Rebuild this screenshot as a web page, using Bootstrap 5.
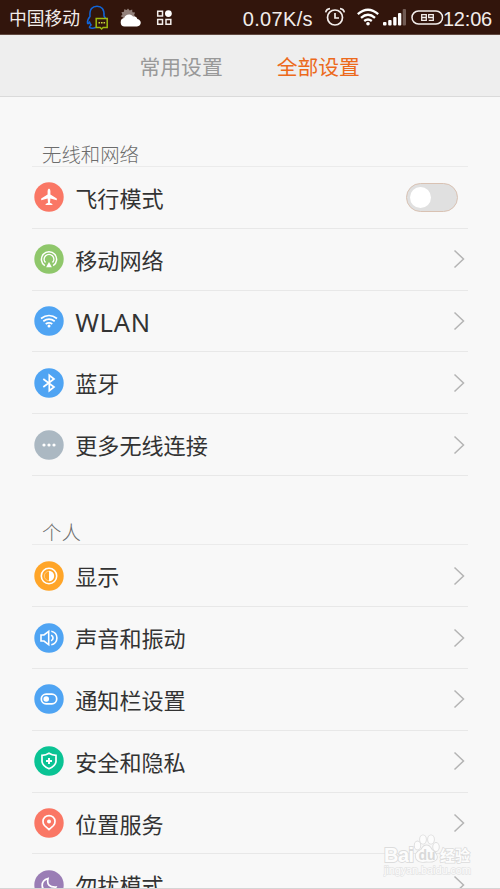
<!DOCTYPE html>
<html lang="zh-CN">
<head>
<meta charset="utf-8">
<meta name="viewport" content="width=device-width, initial-scale=1">
<title>全部设置</title>
<link href="https://cdn.jsdelivr.net/npm/bootstrap@5.3.0/dist/css/bootstrap.min.css" rel="stylesheet">
<style>
body{font-family:"Noto Sans CJK SC",sans-serif;background:#f8f8f8;color:#333;height:889px}
svg{display:block;flex:none}
.screen{height:889px}
.status{height:35px;background:#32150c;color:#f1ecea;border-bottom:1px solid #60483f;padding:0 8px 0 9px}
.carrier{font-size:17.8px;line-height:34px;width:77px}
.latin{font-family:"Liberation Sans",sans-serif;font-size:20px;line-height:34px;padding-top:3px}
.speed{letter-spacing:.35px;margin-right:11px}
.clock{letter-spacing:-.2px;margin-left:-1px}
.cloud{margin-left:10px}
.apps{margin-left:14px}
.wifi{margin-left:10px}
.signal{margin-left:3px}
.battery{margin-left:4px}
.tabs{height:62px;background:#eee;border-bottom:1px solid #dadada;font-size:20.8px;gap:54px;padding-left:139.5px}
.tabs a{color:#999;line-height:63px}
.tabs a.active{color:#ec6a1c}
.settings{padding:0 32px}
.heading{height:70px;padding-top:44px;font-size:19.4px;line-height:25px;color:#6c6c6c;font-weight:300;padding-left:10px;border-bottom:1px solid #ebebeb}
.heading-own{height:69.5px;padding-top:43px}
.item{height:61.8px;border-bottom:1px solid #e8e8e8;padding:0 3px 0 2.4px;font-size:22.1px}
.item .title{margin-left:10.8px;line-height:32px;padding-bottom:1px}
.item .wlan{font-family:"Noto Sans",sans-serif;font-size:25.5px;letter-spacing:.7px;padding-top:2px;padding-bottom:0}
.toggle{width:52px;height:29px;border:1px solid #d9c2b3;border-radius:15px;background:#e0e0e0;margin-right:7px;padding:3px}
.knob{width:21px;height:21px;border-radius:50%;background:#fff}
.bottom-line{height:1px;background:#d5d5d5;bottom:0}
.watermark{left:383px;top:833px}
</style>
<script src="https://cdn.jsdelivr.net/npm/bootstrap@5.3.0/dist/js/bootstrap.bundle.min.js"></script>
</head>
<body class="overflow-hidden">
<svg width="0" height="0" class="position-absolute"><defs>
<symbol id="chev" viewBox="0 0 12 20"><path d="M1.500 1.500L10.500 10L1.500 18.500" fill="none" stroke="#b4b4b4" stroke-width="1.500"/></symbol>
</defs></svg>
<div class="screen position-relative overflow-hidden">
<header class="status d-flex align-items-center">
  <span class="carrier text-nowrap">中国移动</span>
  <svg width="24" height="28" viewBox="0 0 24 28" fill="none"><path d="M10 24.300Q6 26 3.500 24.500Q3 24 5 22Q4 20.500 3.600 19.300Q2 21.500 1.500 20.300Q1 17 4 13.500C3.300 6 6.500 3.200 11 3.200S18.500 6 18 13L20 16" stroke="#1165d8" stroke-width="1.500"/><path d="M10.200 15.600h11v8.800h-4.100l-1.500 1.600-1.500-1.600h-3.900z" fill="#32150c" stroke="#9dba10" stroke-width="1.500"/><path d="M12.500 19.800h1.600m.9 0h1.600m.9 0h1.600" stroke="#c7d53a" stroke-width="1.500"/></svg>
  <svg class="cloud" width="22" height="22" viewBox="0 0 22 22"><path d="M8 2.500l1.700 2 2.500-1 .2 2.700 2.700.4-1 2.400 1.500 2.200-3 3H3.500L3 11.500.8 10.300l1.600-1.900-1-2.200 2.600-.4.200-2.600 2.500.9z" fill="#93817b"/><path d="M4.500 20.500a4.300 4.300 0 0 1-.3-8.500c1-3.600 6-4.800 8.800-1.400 2.600-.6 4 .8 4.300 2.400 4.800 1.100 4.500 7-.3 7.500z" fill="#fff"/></svg>
  <svg class="apps" width="17" height="17" viewBox="0 0 17 17" fill="none" stroke="#f3eeec" stroke-width="1.500"><path d="M1.700 2.200h4.800v4.800H1.700zM1.700 10.500h4.800v4.800H1.700zM10 10.500h4.800v4.800H10z"/><circle cx="12.400" cy="4.600" r="3.400" fill="#fff" stroke="none"/></svg>
  <span class="latin speed ms-auto text-nowrap">0.07K/s</span>
  <svg width="22" height="20" viewBox="0 0 22 20" fill="none" stroke="#f3eeec" stroke-width="1.700"><circle cx="11" cy="10.500" r="7.500"/><path d="M11 6v5h4M1.700 5.300Q2.300 2 6 1.600M20.300 5.300Q19.700 2 16 1.600"/></svg>
  <svg class="wifi" width="24" height="18" viewBox="0 0 24 18" fill="none" stroke="#fff" stroke-width="2.300"><path d="M1.800 6.200Q12-2.800 22.200 6.200M5 9.800Q12 3.700 19 9.800M8.200 13Q12 9.900 15.800 13"/><circle cx="12" cy="15.700" r="1.800" fill="#fff" stroke="none"/></svg>
  <svg class="signal" width="24" height="18" viewBox="0 0 24 18" fill="#fff"><rect x="0" y="14" width="3.500" height="3.500" rx="1"/><rect x="5.200" y="12" width="3.400" height="5.500" rx="1"/><rect x="10.200" y="9" width="3.300" height="8.500" rx="1"/><rect x="15" y="5" width="3.300" height="12.500" rx="1"/><rect x="19.700" y="1" width="3.300" height="16.500" rx="1" fill="#715b54"/></svg>
  <svg class="battery" width="33" height="16" viewBox="0 0 33 16" fill="none" stroke="#f3eeec"><rect x="1" y="2" width="30.500" height="13" rx="6.500" stroke-width="1.500"/><path d="M10.700 5.700h4.600v5.600h-4.600zM10.700 8.500h4.600M17.700 11.300h4.600v-5.600h-4.600v2.800h4.600" stroke-width="1.300"/></svg>
  <span class="latin clock">12:06</span>
</header>
<nav class="tabs d-flex"><a class="text-decoration-none text-nowrap">常用设置</a><a class="active text-decoration-none text-nowrap">全部设置</a></nav>
<main class="settings">
  <div class="heading">无线和网络</div>
  <div class="item d-flex align-items-center"><svg width="30" height="30" viewBox="0 0 30 30"><circle cx="15" cy="15" r="14.700" fill="#fa7765"/><path d="M15 6.500q1.400.8 1.400 2.600v3.500l6.400 4v1.600l-6.400-1.700-.4 4.300 2.400 1.300v.8h-6.800v-.8l2.400-1.300-.4-4.300-6.400 1.700v-1.600l6.400-4V9.100q0-1.800 1.400-2.600z" fill="#fff"/></svg><span class="title">飞行模式</span><div class="toggle ms-auto"><div class="knob"></div></div></div>
  <div class="item d-flex align-items-center"><svg width="30" height="30" viewBox="0 0 30 30" fill="none" stroke="#fff" stroke-width="1.500"><circle cx="15" cy="15" r="14.700" fill="#8fc76b" stroke="none"/><path d="M10.800 21.700a7.600 7.600 0 1 1 8.400 0M11.500 18.500a4.800 4.800 0 1 1 7 0"/><path d="M15 18l2.900 5.300h-5.800z" fill="#fff" stroke="none"/></svg><span class="title">移动网络</span><svg class="ms-auto" width="12" height="20"><use href="#chev"/></svg></div>
  <div class="item d-flex align-items-center"><svg width="30" height="30" viewBox="0 0 30 30" fill="none" stroke="#fff" stroke-width="1.700"><circle cx="15" cy="15" r="14.700" fill="#4fa4f3" stroke="none"/><path d="M7 12.500Q15 6.500 23 12.500M9.300 15.300Q15 11 20.700 15.300M11.700 18Q15 15.600 18.300 18"/><circle cx="15" cy="20" r="1.500" fill="#fff" stroke="none"/></svg><span class="title wlan">WLAN</span><svg class="ms-auto" width="12" height="20"><use href="#chev"/></svg></div>
  <div class="item d-flex align-items-center"><svg width="30" height="30" viewBox="0 0 30 30" fill="none" stroke="#fff" stroke-width="1.700"><circle cx="15" cy="15" r="14.700" fill="#4fa4f3" stroke="none"/><path d="M9.300 11l10.700 8-4.700 3.700V7.300L20 11 9.300 19"/></svg><span class="title">蓝牙</span><svg class="ms-auto" width="12" height="20"><use href="#chev"/></svg></div>
  <div class="item d-flex align-items-center"><svg width="30" height="30" viewBox="0 0 30 30" fill="#fff"><circle cx="15" cy="15" r="14.700" fill="#abb8c2"/><circle cx="10" cy="15" r="1.600"/><circle cx="15" cy="15" r="1.600"/><circle cx="20" cy="15" r="1.600"/></svg><span class="title">更多无线连接</span><svg class="ms-auto" width="12" height="20"><use href="#chev"/></svg></div>
  <div class="heading heading-own">个人</div>
  <div class="item d-flex align-items-center"><svg width="30" height="30" viewBox="0 0 30 30" fill="none" stroke="#fff" stroke-width="1.600"><circle cx="15" cy="15" r="14.700" fill="#ffa528" stroke="none"/><circle cx="15" cy="15" r="7.700"/><path d="M15 10.300a4.700 4.700 0 0 0 0 9.400" stroke-width="1" stroke="#ffd08a"/><path d="M15 9.800a5.200 5.200 0 0 1 0 10.400z" fill="#fff" stroke="none"/></svg><span class="title">显示</span><svg class="ms-auto" width="12" height="20"><use href="#chev"/></svg></div>
  <div class="item d-flex align-items-center"><svg width="30" height="30" viewBox="0 0 30 30" fill="none" stroke="#fff" stroke-width="1.600"><circle cx="15" cy="15" r="14.700" fill="#4fa4f3" stroke="none"/><path d="M7 12h3l4.700-3.700v13.400L10 18H7zM17 12.300a2.800 2.800 0 0 1 0 5.400M17.300 8.300a6.800 6.800 0 0 1 0 13.400"/></svg><span class="title">声音和振动</span><svg class="ms-auto" width="12" height="20"><use href="#chev"/></svg></div>
  <div class="item d-flex align-items-center"><svg width="30" height="30" viewBox="0 0 30 30" fill="none" stroke="#fff" stroke-width="1.700"><circle cx="15" cy="15" r="14.700" fill="#4fa4f3" stroke="none"/><rect x="7.300" y="10.200" width="15.400" height="9.600" rx="4.800"/><circle cx="12.200" cy="15" r="2.800" fill="#fff" stroke="none"/></svg><span class="title">通知栏设置</span><svg class="ms-auto" width="12" height="20"><use href="#chev"/></svg></div>
  <div class="item d-flex align-items-center"><svg width="30" height="30" viewBox="0 0 30 30" fill="none" stroke="#fff" stroke-width="1.700"><circle cx="15" cy="15" r="14.700" fill="#0ac394" stroke="none"/><path d="M15 7.300Q18 9.300 22 9.300V15.500Q21.500 20 15 22.800Q8.500 20 8 15.500V9.300Q12 9.300 15 7.300z"/><path d="M15 12v6M12 15h6" stroke-width="2"/></svg><span class="title">安全和隐私</span><svg class="ms-auto" width="12" height="20"><use href="#chev"/></svg></div>
  <div class="item d-flex align-items-center"><svg width="30" height="30" viewBox="0 0 30 30" fill="none" stroke="#fff" stroke-width="1.700"><circle cx="15" cy="15" r="14.700" fill="#fa7765" stroke="none"/><path d="M15 21.700l-4.500-4.200a6 6 0 1 1 9 0z"/><circle cx="15" cy="13.500" r="2" fill="#fff" stroke="none"/></svg><span class="title">位置服务</span><svg class="ms-auto" width="12" height="20"><use href="#chev"/></svg></div>
  <div class="item d-flex align-items-center"><svg width="30" height="30" viewBox="0 0 30 30" fill="none" stroke="#fff" stroke-width="1.700"><circle cx="15" cy="15" r="14.700" fill="#9a7db5" stroke="none"/><path d="M14 8.500Q12 17.500 22 17Q19.500 22.500 14 21.500C6 20 6.500 10.500 14 8.500z"/></svg><span class="title">勿扰模式</span><svg class="ms-auto" width="12" height="20"><use href="#chev"/></svg></div>
</main>
<svg class="watermark position-absolute" width="94" height="46" viewBox="0 0 94 46" fill="#fcfcfc" stroke="#dcdcdc" stroke-width="1.800" paint-order="stroke">
  <g font-family="Liberation Sans, sans-serif" font-weight="700"><text x="1" y="28.500" font-size="20" textLength="30">Bai</text><ellipse cx="34.500" cy="12.500" rx="2.800" ry="4"/><ellipse cx="40" cy="6.500" rx="2.900" ry="4.200"/><ellipse cx="48" cy="6.500" rx="2.900" ry="4.200"/><ellipse cx="53" cy="14" rx="2.800" ry="4"/><path d="M43.500 12.500Q46.500 12.500 48.500 16.500Q55.500 22 53.500 26Q51 29.500 43.500 28.500Q36.500 30 33.500 26Q30.500 20 38.500 16.500Q40.500 12.500 43.500 12.500z"/><text x="35.500" y="27" font-size="14" fill="#d9d9d9" stroke="none">du</text></g>
  <text x="57" y="28" font-family="Noto Sans CJK SC, sans-serif" font-weight="700" font-size="15" stroke-width="1.500">经验</text>
  <text x="1" y="41" font-family="Liberation Sans, sans-serif" font-size="11" textLength="87" stroke="#e4e4e4" stroke-width="1.300">jingyan.baidu.com</text>
</svg>
<div class="bottom-line position-absolute start-0 end-0"></div>
</div>
</body>
</html>
